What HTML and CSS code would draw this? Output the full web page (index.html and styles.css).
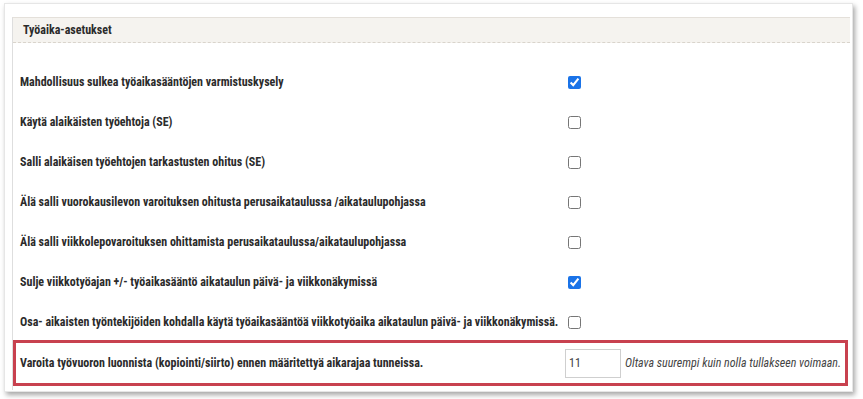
FILE: index.html
```html
<!DOCTYPE html>
<html lang="fi">
<head>
  <meta charset="UTF-8" />
  <title>Työaika-asetukset</title>
  <link rel="stylesheet" href="styles.css">
</head>
<body>
  <div class="card">
    <div class="panel">
      <!-- Header -->
      <div class="panel-title">Työaika-asetukset</div>

      <div class="rows">
        <div class="row">
          <div class="label">Mahdollisuus sulkea työaikasääntöjen varmistuskysely</div>
          <div class="field"><input type="checkbox" checked></div>
        </div>
        <div class="row">
          <div class="label">Käytä alaikäisten työehtoja (SE)</div>
          <div class="field"><input type="checkbox"></div>
        </div>
        <div class="row">
          <div class="label">Salli alaikäisen työehtojen tarkastusten ohitus (SE)</div>
          <div class="field"><input type="checkbox"></div>
        </div>
        <div class="row">
          <div class="label">Älä salli vuorokausilevon varoituksen ohitusta perusaikataulussa /aikataulupohjassa</div>
          <div class="field"><input type="checkbox"></div>
        </div>
        <div class="row">
          <div class="label">Älä salli viikkolepovaroituksen ohittamista perusaikataulussa/aikataulupohjassa</div>
          <div class="field"><input type="checkbox"></div>
        </div>
        <div class="row">
          <div class="label">Sulje viikkotyöajan +/- työaikasääntö aikataulun päivä- ja viikkonäkymissä</div>
          <div class="field"><input type="checkbox" checked></div>
        </div>
        <div class="row">
          <div class="label">Osa- aikaisten työntekijöiden kohdalla käytä työaikasääntöä viikkotyöaika aikataulun päivä- ja viikkonäkymissä.</div>
          <div class="field"><input type="checkbox"></div>
        </div>

        <!-- Highlighted row -->
        <div class="row highlight">
          <div class="label">Varoita työvuoron luonnista (kopiointi/siirto) ennen määritettyä aikarajaa tunneissa.</div>
          <div class="field">
            <input type="text" class="num-input" value="11">
            <span class="hint">Oltava suurempi kuin nolla tullakseen voimaan.</span>
          </div>
        </div>
      </div>
    </div>
  </div>
</body>
</html>
```

FILE: styles.css
```css
* {
  margin: 0;
  padding: 0;
  box-sizing: border-box;
}

html, body {
  width: 863px;
  height: 399px;
  background: #ffffff;
  overflow: hidden;
  font-family: "Roboto", "Liberation Sans", sans-serif;
  font-stretch: condensed;
  color: #2b2b2b;
}

.card {
  margin: 3px 10px 0 4px;
  width: 849px;
  height: 389px;
  background: #fff;
  border: 1px solid #e6e6e6;
  box-shadow: 2px 3px 5px rgba(0, 0, 0, 0.35);
  padding: 13px 2px 0 7px;
}

.panel {
  border-left: 1px solid #dedede;
  border-top: 1px solid #e4e0da;
  height: 373px;
}

.panel-title {
  height: 25px;
  background: #f5f3ef;
  border-bottom: 1px dashed #d9d4cc;
  padding-left: 10px;
  display: flex;
  align-items: center;
  font-size: 12px;
  font-weight: 700;
  color: #2b2b2b;
}

.rows {
  padding-top: 19px;
}

.row {
  display: flex;
  align-items: center;
  height: 40px;
  padding-left: 7px;
}

.label {
  flex: none;
  width: 548px;
  white-space: nowrap;
  font-size: 12px;
  font-weight: 700;
  color: #2b2b2b;
}

.field {
  display: flex;
  align-items: center;
  white-space: nowrap;
}

.field input[type="checkbox"] {
  width: 13px;
  height: 13px;
  margin-left: 0;
  accent-color: #1a73e8;
}

.highlight {
  height: 46px;
  margin-top: -2px;
  margin-right: 2px;
  border: 3px solid #c8414f;
  padding-left: 4px;
}

.highlight .label {
  width: 546px;
}

.num-input {
  flex: none;
  width: 56px;
  height: 29px;
  border: 1px solid #cfcfcf;
  padding-left: 3px;
  font-family: "Roboto", sans-serif;
  font-stretch: condensed;
  font-size: 12px;
  color: #444;
  margin-left: -1px;
}

.hint {
  margin-left: 4px;
  font-size: 12px;
  font-style: italic;
  color: #444;
}
```
